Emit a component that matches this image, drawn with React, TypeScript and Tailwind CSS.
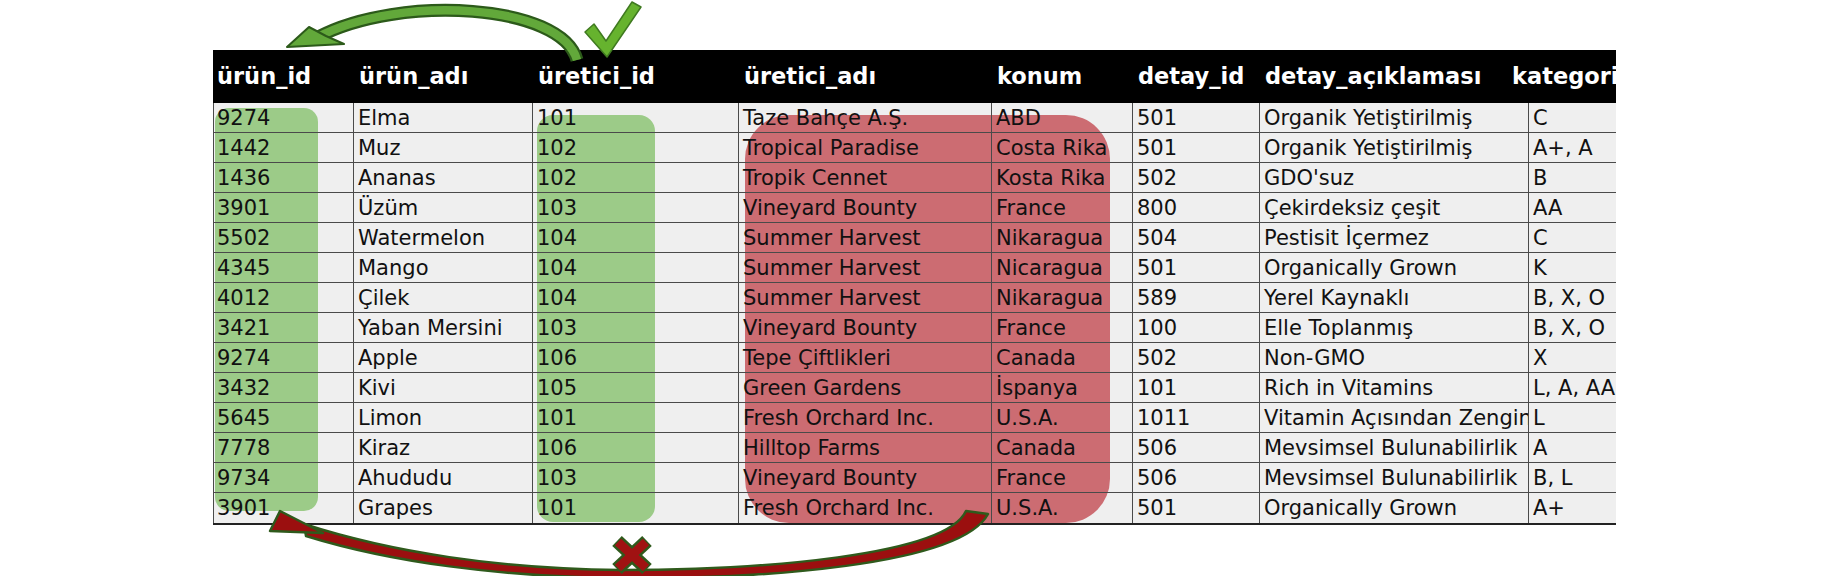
import React from "react";

const headers = ["ürün_id", "ürün_adı", "üretici_id", "üretici_adı", "konum", "detay_id", "detay_açıklaması", "kategori"];
const rows: string[][] = [
  ["9274", "Elma", "101", "Taze Bahçe A.Ş.", "ABD", "501", "Organik Yetiştirilmiş", "C"],
  ["1442", "Muz", "102", "Tropical Paradise", "Costa Rika", "501", "Organik Yetiştirilmiş", "A+, A"],
  ["1436", "Ananas", "102", "Tropik Cennet", "Kosta Rika", "502", "GDO'suz", "B"],
  ["3901", "Üzüm", "103", "Vineyard Bounty", "France", "800", "Çekirdeksiz çeşit", "AA"],
  ["5502", "Watermelon", "104", "Summer Harvest", "Nikaragua", "504", "Pestisit İçermez", "C"],
  ["4345", "Mango", "104", "Summer Harvest", "Nicaragua", "501", "Organically Grown", "K"],
  ["4012", "Çilek", "104", "Summer Harvest", "Nikaragua", "589", "Yerel Kaynaklı", "B, X, O"],
  ["3421", "Yaban Mersini", "103", "Vineyard Bounty", "France", "100", "Elle Toplanmış", "B, X, O"],
  ["9274", "Apple", "106", "Tepe Çiftlikleri", "Canada", "502", "Non-GMO", "X"],
  ["3432", "Kivi", "105", "Green Gardens", "İspanya", "101", "Rich in Vitamins", "L, A, AA"],
  ["5645", "Limon", "101", "Fresh Orchard Inc.", "U.S.A.", "1011", "Vitamin Açısından Zengin", "L"],
  ["7778", "Kiraz", "106", "Hilltop Farms", "Canada", "506", "Mevsimsel Bulunabilirlik", "A"],
  ["9734", "Ahududu", "103", "Vineyard Bounty", "France", "506", "Mevsimsel Bulunabilirlik", "B, L"],
  ["3901", "Grapes", "101", "Fresh Orchard Inc.", "U.S.A.", "501", "Organically Grown", "A+"],
];

const gridCols = "grid grid-cols-[141px_179px_206px_253px_141px_127px_269px_87px]";

export default function App() {
  return (
    <div className="relative w-[1824px] h-[576px] overflow-hidden bg-white [font-family:'DejaVu_Sans',Verdana,sans-serif]">
      <div className="pl-[213px] pt-[50px]">
        <div className="w-[1403px]">
          {/* header */}
          <div className={`${gridCols} h-[53px] bg-black items-center overflow-hidden`}>
            {headers.map((h, i) => (
              <div
                key={i}
                className={`text-white font-bold text-[22.5px] whitespace-nowrap ${i === 0 ? "pl-[4px]" : i === 7 ? "-ml-[17px]" : "pl-[5px]"}`}
              >
                {h}
              </div>
            ))}
          </div>
          {/* body */}
          <div className="relative bg-[#efefef] border-b-2 border-[#222]">
            <div className="absolute left-[2px] top-[5px] w-[103px] h-[403px] rounded-[14px] bg-[#9ccb88]" />
            <div className="absolute left-[324px] top-[12px] w-[118px] h-[407px] rounded-[16px] bg-[#9ccb88]" />
            <div className="absolute left-[532px] top-[12px] w-[365px] h-[408px] rounded-[44px] bg-[#cc6c72]" />
            <div className="relative">
              {rows.map((r, ri) => (
                <div key={ri} className={`${gridCols} h-[30px]`}>
                  {r.map((c, ci) => (
                    <div
                      key={ci}
                      className={`h-[30px] flex items-center pt-[2px] overflow-hidden whitespace-nowrap text-[21px] text-[#111] border-[#4a4a4a] border-r ${ri < rows.length - 1 ? "border-b" : ""} ${ci === 0 ? "border-l pl-[3px]" : "pl-[4px]"} ${ci === 7 ? "border-r-0" : ""}`}
                    >
                      {c}
                    </div>
                  ))}
                </div>
              ))}
            </div>
          </div>
        </div>
      </div>

      {/* arrows overlay */}
      <svg className="absolute left-0 top-0 pointer-events-none" width="1824" height="576" viewBox="0 0 1824 576">
        {/* top green arrow */}
        <path d="M 577 60 C 562 4, 400 -6, 318 37" fill="none" stroke="#2c5a1a" strokeWidth="13" />
        <path d="M 577 60 C 562 4, 400 -6, 318 37" fill="none" stroke="#62a83a" strokeWidth="8.5" />
        <polygon points="287,47 309,27 326,36 344,44" fill="#62a83a" stroke="#2c5a1a" strokeWidth="2" strokeLinejoin="round" />
        {/* check mark */}
        <polygon points="585,32 594,24 606,41 632,2 641,7 607,57" fill="#66b32e" stroke="#3f7a20" strokeWidth="1.5" strokeLinejoin="round" />
        {/* bottom red arrow (tapered) */}
        <path
          d="M 966 511 C 945 556, 760 570, 620 570 C 500 569, 390 552, 304 524 L 306 536 C 390 562, 500 577, 620 578 C 760 579, 960 566, 988 514 Z"
          fill="#9b0f0f"
          stroke="#2f5a1c"
          strokeWidth="2.5"
          strokeLinejoin="round"
        />
        <polygon points="280,511 270,531 323,533" fill="#9b0f0f" stroke="#2f5a1c" strokeWidth="2.5" strokeLinejoin="round" />
        {/* x mark */}
        <g strokeLinecap="butt">
          <line x1="617" y1="541" x2="647" y2="569" stroke="#2f5a1c" strokeWidth="14" />
          <line x1="647" y1="541" x2="617" y2="569" stroke="#2f5a1c" strokeWidth="14" />
          <line x1="618" y1="542" x2="646" y2="568" stroke="#a01212" strokeWidth="9" />
          <line x1="646" y1="542" x2="618" y2="568" stroke="#a01212" strokeWidth="9" />
        </g>
      </svg>
    </div>
  );
}
